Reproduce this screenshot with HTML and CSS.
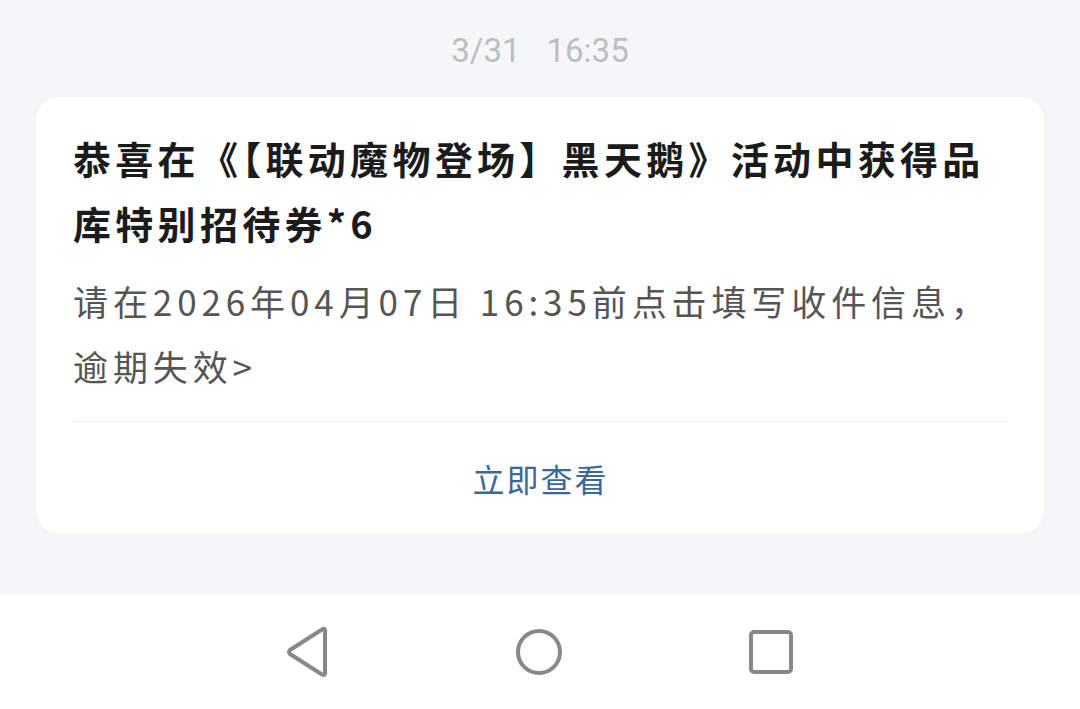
FILE: index.html
```
<!DOCTYPE html>
<html>

<head>
    <title>消息通知</title>
    <link rel="stylesheet" href="styles.css">
</head>

<body>
    <div class="page">
        <div class="msg-time">
            <span>3/31</span>
            <span>16:35</span>
        </div>

        <div class="card">
            <div class="card-title">恭喜在《【联动魔物登场】黑天鹅》活动中获得品<br>库特别招待券*6</div>
            <div class="card-text">请在2026年04月07日 16:35前点击填写收件信息，<br>逾期失效&gt;</div>
            <div class="card-action">立即查看</div>
        </div>

        <div class="spacer"></div>

        <!-- system navigation bar -->
        <div class="navbar">
            <svg class="nav-icon" width="44" height="52" viewBox="0 0 44 52">
                <path d="M39 4 L39 47 Q39 50 36 48.5 L4 28 Q2 26 4 24 L36 3.5 Q39 2 39 4 Z" fill="none" stroke="#888" stroke-width="4" stroke-linejoin="round"/>
            </svg>
            <svg class="nav-icon" width="48" height="48" viewBox="0 0 48 48">
                <circle cx="24" cy="24" r="21" fill="none" stroke="#888" stroke-width="4"/>
            </svg>
            <svg class="nav-icon" width="46" height="46" viewBox="0 0 46 46">
                <rect x="3" y="3" width="40" height="40" rx="3" fill="none" stroke="#888" stroke-width="4"/>
            </svg>
        </div>
    </div>
</body>

</html>
```

FILE: styles.css
```
html,
body {
    margin: 0;
    padding: 0;
    background-color: #f5f6f8;
}

body {
    font-family: "Noto Sans CJK SC", "Noto Sans", sans-serif;
}

.page {
    display: flex;
    flex-direction: column;
    height: 709px;
}

.msg-time {
    height: 93px;
    padding-top: 4px;
    display: flex;
    justify-content: center;
    align-items: center;
    gap: 26px;
    font-family: Roboto, "Noto Sans", sans-serif;
    font-size: 33px;
    color: #bcbec2;
}

.card {
    margin: 0 36px;
    background-color: #ffffff;
    border-radius: 24px;
    padding: 28px 36px 0 37px;
}

.card-title {
    font-size: 38px;
    font-weight: bold;
    letter-spacing: 4.3px;
    line-height: 65px;
    white-space: nowrap;
    color: #1b1b1b;
}

.card-text {
    margin-top: 13px;
    font-size: 35px;
    letter-spacing: 4.9px;
    line-height: 65px;
    white-space: nowrap;
    color: #555555;
}

.card-action {
    margin-top: 23px;
    border-top: 1px solid #eeeeee;
    height: 112px;
    display: flex;
    justify-content: center;
    align-items: center;
    font-size: 32px;
    letter-spacing: 2px;
    color: #3b6899;
}

.spacer {
    flex: 1;
}

.navbar {
    height: 115px;
    background-color: #ffffff;
    display: flex;
    justify-content: center;
    align-items: center;
    gap: 185px;
}
```
